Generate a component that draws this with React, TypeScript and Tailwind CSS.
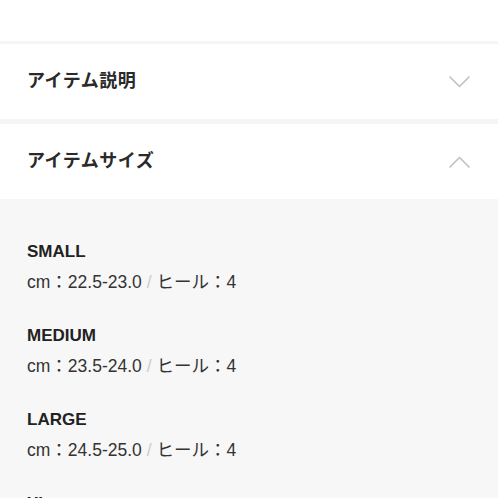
const sizes = [
  { name: "SMALL", cm: "22.5-23.0", heel: "4" },
  { name: "MEDIUM", cm: "23.5-24.0", heel: "4" },
  { name: "LARGE", cm: "24.5-25.0", heel: "4" },
  { name: "XL", cm: "25.5-26.0", heel: "4" },
];

// thin caret used by the accordion headers
function Caret({ up }: { up?: boolean }) {
  return (
    <svg width="21" height="12" viewBox="0 0 21 12" fill="none" className="mr-[1px]">
      <polyline
        points={up ? "1,11 10.5,1.5 20,11" : "1,1 10.5,10.5 20,1"}
        stroke="#c2c2c2"
        strokeWidth="1.7"
        strokeLinecap="round"
        strokeLinejoin="round"
      />
    </svg>
  );
}

export default function App() {
  return (
    <div
      className="h-[498px] overflow-hidden bg-white text-[#222]"
      style={{ fontFamily: '"Liberation Sans", "Noto Sans CJK JP", sans-serif' }}
    >
      {/* bottom of the block above */}
      <div className="h-[41px] bg-white" />

      <div className="h-[3px] bg-[#f5f5f5]" />

      {/* description (closed) */}
      <div className="h-[75px] flex items-center justify-between pl-[27px] pr-[27px]">
        <h2 className="text-[18px] font-semibold tracking-[0.5px] text-[#2a2a2a]">アイテム説明</h2>
        <Caret />
      </div>

      <div className="h-[5px] bg-[#f5f5f5]" />

      {/* size (open) */}
      <div className="h-[75px] flex items-center justify-between pl-[27px] pr-[27px]">
        <h2 className="text-[18px] font-semibold tracking-[0.5px] text-[#2a2a2a]">アイテムサイズ</h2>
        <Caret up />
      </div>

      <div className="bg-[#f7f7f7] pt-[41px] pl-[27px] flex flex-col gap-[30px]">
        {sizes.map((s) => (
          <div key={s.name} className="flex flex-col gap-[6px]">
            <p className="text-[17px] leading-[24px] font-semibold text-[#222]">{s.name}</p>
            <p className="text-[17.5px] leading-[24px] text-[#333]">
              cm：{s.cm} <span className="text-[#ccc]">/</span> ヒール：{s.heel}
            </p>
          </div>
        ))}
      </div>
    </div>
  );
}
